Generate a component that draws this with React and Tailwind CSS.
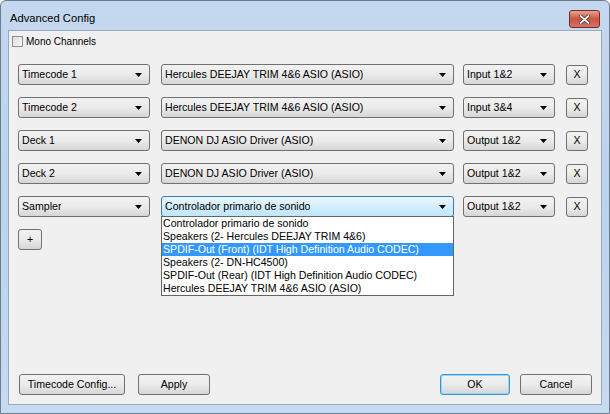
import React from 'react';

const font = { fontFamily: '"Liberation Sans", Arial, sans-serif' };

const Arrow = () => (
  <svg width="7" height="4" viewBox="0 0 7 4" className="shrink-0">
    <path d="M0 0h7L3.5 4z" fill="#000" />
  </svg>
);

const Combo = ({ value, w, active }) => (
  <div
    className={`h-[21px] ${w} shrink-0 flex items-center justify-between pl-[3px] pr-[7px] rounded-[3px] border text-[10.6px] text-black ${
      active
        ? 'border-[#3c7fb1] bg-gradient-to-b from-[#eaf6fd] to-[#bee6fd]'
        : 'border-[#707070] bg-gradient-to-b from-[#f2f2f2] via-[#ebebeb] to-[#d6d6d6]'
    }`}
  >
    <span className="truncate">{value}</span>
    <Arrow />
  </div>
);

const Btn = ({ children, w, h = 'h-[21px]', def }) => (
  <button
    className={`${h} ${w} shrink-0 rounded-[3px] border text-[10.6px] text-black bg-gradient-to-b from-[#f2f2f2] via-[#ebebeb] to-[#d6d6d6] ${
      def ? 'border-[#3399dd] shadow-[inset_0_0_0_1px_#9cd2f3]' : 'border-[#707070]'
    }`}
  >
    {children}
  </button>
);

const rows = [
  ['Timecode 1', 'Hercules DEEJAY TRIM 4&6 ASIO (ASIO)', 'Input 1&2'],
  ['Timecode 2', 'Hercules DEEJAY TRIM 4&6 ASIO (ASIO)', 'Input 3&4'],
  ['Deck 1', 'DENON DJ ASIO Driver (ASIO)', 'Output 1&2'],
  ['Deck 2', 'DENON DJ ASIO Driver (ASIO)', 'Output 1&2'],
  ['Sampler', 'Controlador primario de sonido', 'Output 1&2'],
];

const options = [
  'Controlador primario de sonido',
  'Speakers (2- Hercules DEEJAY TRIM 4&6)',
  'SPDIF-Out (Front) (IDT High Definition Audio CODEC)',
  'Speakers (2- DN-HC4500)',
  'SPDIF-Out (Rear) (IDT High Definition Audio CODEC)',
  'Hercules DEEJAY TRIM 4&6 ASIO (ASIO)',
];

export default function App() {
  return (
    <div style={font} className="w-[610px] h-[414px] overflow-hidden">
      <div className="w-full h-full flex flex-col border border-[#6d7d8e] rounded-t-[6px] bg-gradient-to-b from-[#c4d8ef] via-[#bcd3ee] to-[#c6dbf1]">
        <div className="h-[29px] shrink-0 flex justify-between pl-[9px] pr-[9px]">
          <span className="text-[11.2px] leading-[14px] pt-[10px] text-black">Advanced Config</span>
          <div className="w-[31px] h-[18px] mt-[9px] rounded-[3px] border border-[#7a2a22] bg-gradient-to-b from-[#e8a293] via-[#c9553e] to-[#d0756a] flex items-center justify-center">
            <svg width="11" height="9" viewBox="0 0 11 9">
              <path d="M1.5 1l8 7M9.5 1l-8 7" stroke="#3b1a15" strokeWidth="3.2" strokeLinecap="round" />
              <path d="M1.5 1l8 7M9.5 1l-8 7" stroke="#fff" strokeWidth="1.8" strokeLinecap="round" />
            </svg>
          </div>
        </div>
        <div className="flex-1 mx-[7px] mb-[8px] bg-[#f0f0f0] border border-[#99aabd] flex flex-col relative">
          <div className="flex items-center gap-[3px] pl-[3px] mt-[5px] h-[11px] text-[10px] leading-[11px] text-black">
            <div className="w-[11px] h-[11px] border border-[#8f8f8f] bg-gradient-to-br from-[#dcdcdc] to-[#f8f8f8]" />
            <span>Mono Channels</span>
          </div>
          <div className="flex flex-col gap-[12px] pl-[9px] mt-[17px]">
            {rows.map(([a, b, c], i) => (
              <div key={i} className="flex items-center">
                <Combo value={a} w="w-[132px]" />
                <div className="w-[11px]" />
                <div className="relative">
                  <Combo value={b} w="w-[293px]" active={i === 4} />
                  {i === 4 && (
                    <div className="absolute left-0 top-[20px] w-[293px] bg-white border border-[#646464] text-[10.6px] text-black leading-[13px] z-10">
                      {options.map((o, j) => (
                        <div
                          key={j}
                          className={`pl-[1px] h-[13px] whitespace-nowrap ${j === 2 ? 'bg-[#3399ff] text-white' : ''}`}
                        >
                          {o}
                        </div>
                      ))}
                    </div>
                  )}
                </div>
                <div className="w-[9px]" />
                <Combo value={c} w="w-[92px]" />
                <div className="w-[11px]" />
                <Btn w="w-[22px]" h="h-[20px]">X</Btn>
              </div>
            ))}
          </div>
          <div className="pl-[9px] mt-[9px]">
            <Btn w="w-[24px]">+</Btn>
          </div>
          <div className="flex-1" />
          <div className="flex items-center pl-[10px] pr-[9px] pb-[9px]">
            <Btn w="w-[106px]">Timecode Config...</Btn>
            <div className="w-[13px]" />
            <Btn w="w-[72px]">Apply</Btn>
            <div className="flex-1" />
            <Btn w="w-[70px]" def>OK</Btn>
            <div className="w-[10px]" />
            <Btn w="w-[72px]">Cancel</Btn>
          </div>
        </div>
      </div>
    </div>
  );
}
